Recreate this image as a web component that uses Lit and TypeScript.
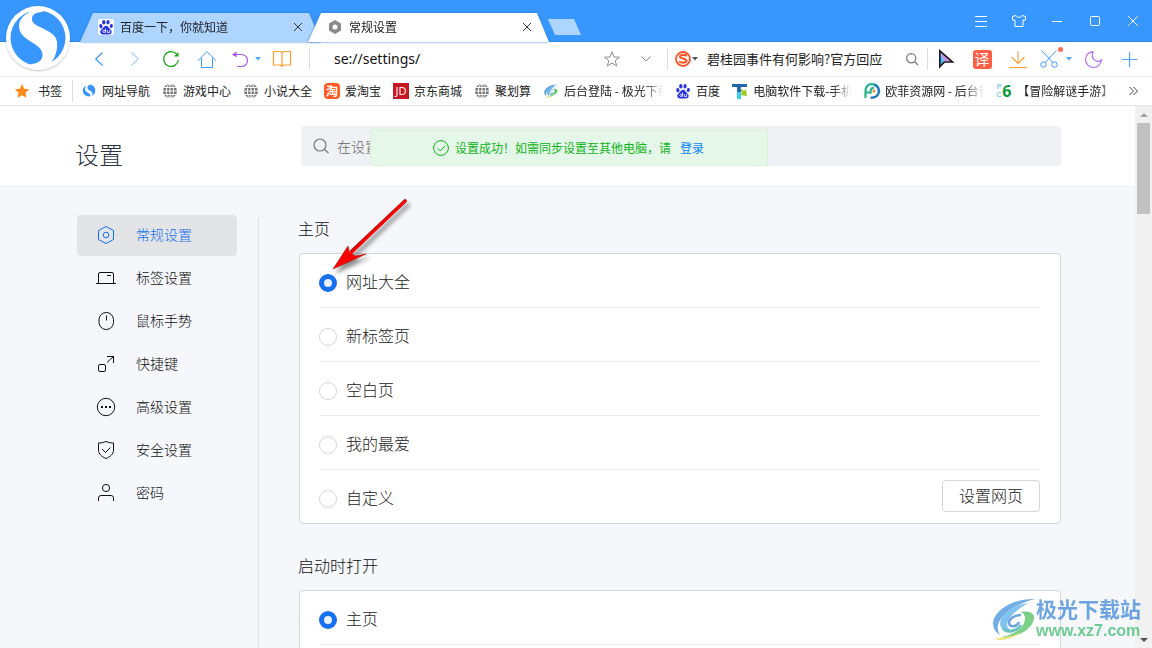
import { LitElement, html, css, svg, nothing } from "lit";
import { customElement, state } from "lit/decorators.js";
import { classMap } from "lit/directives/class-map.js";

const icon = (w: number, h: number, body: unknown) =>
  html`<svg class="ic" width=${w} height=${h} viewBox="0 0 ${w} ${h}" fill="none" aria-hidden="true">${body}</svg>`;

const paw = (size: number) => html`<svg class="ic" width=${size} height=${size} viewBox="0 0 16 16" fill="#2932e1" aria-hidden="true">
  <ellipse cx="2.9" cy="7.2" rx="1.6" ry="2.2" transform="rotate(-12 2.9 7.2)"></ellipse>
  <ellipse cx="5.8" cy="3.2" rx="1.6" ry="2.3"></ellipse>
  <ellipse cx="10" cy="3.2" rx="1.6" ry="2.3" transform="rotate(8 10 3.2)"></ellipse>
  <ellipse cx="13.3" cy="7" rx="1.6" ry="2.1" transform="rotate(12 13.3 7)"></ellipse>
  <path d="M8 6.8c1.700 0 2.300 1.500 3.500 2.700 1.300 1.300 2.300 2.200 2.100 3.800-.2 1.700-1.600 2.300-3 2.200H5.300c-1.400.1-2.800-.5-3-2.200-.2-1.600.9-2.500 2.200-3.800C5.700 8.300 6.300 6.800 8 6.800z"></path>
  <circle cx="6" cy="12.300" r="1.200" stroke="#fff" stroke-width=".8" fill="none"></circle><path d="M7.500 9.600v4M9.300 11v2.600h2.300V11" stroke="#fff" stroke-width=".8" fill="none"></path>
</svg>`;

const globe = icon(16, 16, svg`<circle cx="8" cy="8" r="7" fill="#777"/><path d="M8 1v14M1 8h14M2.200 4.500h11.600M2.200 11.500h11.600" stroke="#fff"/><ellipse cx="8" cy="8" rx="3.600" ry="7" stroke="#fff"/>`);

const sWave = (size: number) => html`<svg class="ic" width=${size} height=${size} viewBox="0 0 64 64" aria-hidden="true">
  <circle cx="32" cy="32" r="32" fill="#fff"></circle><circle cx="32" cy="32" r="27.5" fill="#3797ff"></circle>
  <path d="M28 4C18 8 13 13 13 20c0 9 8 13 14 17 6 3.500 9.500 7 9.500 12 0 6-5 8.500-11.500 9l1 3h16c7-8 10-17 9-25-1-8-9-11-17-15-6-3-8.500-5-8-9 .5-4 5-6 11-6V3z" fill="#fff"></path>
</svg>`;

const smallWave = icon(16, 16, svg`<path d="M6.500 2.200C3 3 1.200 6 2 9c.7 3 3.500 5 7 4.300 1-.6.5-2-.8-2.800C6 9.200 3.800 8 4 5.500c.2-1.600 1.200-2.600 2.500-3.300z" fill="#3797ff"/><path d="M8.500 1.800c3-.5 5.500 2 5.800 5.200.2 2.500-1 4.700-3 6 .6-2.300.2-3.800-1.800-5C7.800 7 6.300 6 6.500 4.200c.1-1.200.8-2 2-2.400z" fill="#3797ff"/>`);

const swirl = (w: number, h: number, pad = 0) => html`<svg class="ic" width=${w} height=${h} viewBox="${-pad} ${-pad} ${44 + pad * 2} ${42 + pad * 2}" fill="none" aria-hidden="true">
  <path d="M43 1C24 0 2 11 1 25c0 5 2 9 7 12-3-5-3-10 0-15C13 13 25 6 43 1z" fill="#4f9ae0"></path>
  <path d="M36 5C22 7 9 15 8 25c0 6 5 9 11 7-4-2-5-5-3-9 3-6 10-12 20-18z" fill="#62b4ea"></path>
  <path d="M29 17c-7 0-12 4-12 8 1 5 8 4 10-1" stroke="#4a8fd8" stroke-width="2.5"></path>
  <path d="M11 30c3 5 14 4 18-3" stroke="#48b2b0" stroke-width="3"></path>
  <path d="M29 14c12-2 16 4 11 12C34 35 22 40 9 39c10-2 19-6 22-12 3-6 3-10-2-13z" fill="#5cc46a"></path>
  <path d="M3 41c5-2 16-1 26-7-6 5-17 10-26 7z" fill="#e4dc5a"></path>
</svg>`;

const caret = (color: string) => icon(6, 4, svg`<path d="M0 0h6L3 3.500z" fill=${color}/>`);
const cross = icon(10, 10, svg`<path d="M1 1l8 8M9 1L1 9" stroke="#333"/>`);

const bookmarks: { label: string; icon: unknown; clip?: boolean }[] = [
  { label: "网址导航", icon: smallWave },
  { label: "游戏中心", icon: globe },
  { label: "小说大全", icon: globe },
  { label: "爱淘宝", icon: html`<span class="fav tao">淘</span>` },
  { label: "京东商城", icon: html`<span class="fav jd">JD</span>` },
  { label: "聚划算", icon: globe },
  { label: "后台登陆 - 极光下载站", icon: swirl(16, 16, 3), clip: true },
  { label: "百度", icon: paw(16) },
  { label: "电脑软件下载-手机软件", icon: icon(16, 16, svg`<path d="M0 1h15v3H9v12H5V4H0z" fill="#2265b0"/><path d="M5 9h4v7H5z" fill="#3ad0ee"/><path d="M8 5l4 3 2-2 1 7-7-1 2-2z" fill="#9cc820"/>`), clip: true },
  { label: "欧菲资源网 - 后台管理", icon: icon(16, 16, svg`<path d="M10 1.500A6.600 6.600 0 1 1 6.500 14.400" stroke="#1c78b8" stroke-width="2.400"/><path d="M10.500 1.600C5 0 1.500 3 1.500 8v7M2 9.500h5M10 4.800c-3-.3-3.500 2-3.500 6" stroke="#28b48c" stroke-width="2.200"/><circle cx="10" cy="8" r="1.500" fill="#f08a24"/>`), clip: true },
  { label: "【冒险解谜手游】手游", icon: html`<span class="fav pc"><span class="pcs"><span>P</span><span>C</span></span>6</span>`, clip: true },
];

const navItems = [
  { label: "常规设置", icon: svg`<path d="M10 1.500l7.500 4v9l-7.500 4-7.500-4v-9z"/><circle cx="10" cy="10" r="2.800"/>` },
  { label: "标签设置", icon: svg`<path d="M0 15.500h20M2.500 15V6a1.500 1.500 0 0 1 1.500-1.500h12A1.500 1.500 0 0 1 17.500 6v9M11 7.500h4"/>` },
  { label: "鼠标手势", icon: svg`<rect x="3" y="1.500" width="14.500" height="17" rx="7.250"/><path d="M10.500 4.500v5"/>` },
  { label: "快捷键", icon: svg`<rect x="2.500" y="10.500" width="7" height="7" rx="1.500"/><path d="M11 8.500l7-6.500M11 2.500h6.500v6.500"/>` },
  { label: "高级设置", icon: svg`<circle cx="10" cy="10" r="8.700"/><path d="M5 10h2M9 10h2M13 10h2" stroke-width="2"/>` },
  { label: "安全设置", icon: svg`<path d="M10 1.500q4 1.800 7.500 1.500v7c0 4-3.500 7-7.500 8.500C6 17 2.500 14 2.500 10V3q3.500.3 7.500-1.500z"/><path d="M6 9l3.500 3.500 5-5"/>` },
  { label: "密码", icon: svg`<circle cx="10" cy="5" r="3.600"/><path d="M2.500 18v-3a2.500 2.500 0 0 1 2.500-2.500h10a2.500 2.500 0 0 1 2.500 2.500v3"/>` },
];

@customElement("app-root")
export class AppRoot extends LitElement {
  @state() private home = "网址大全";
  @state() private active = "常规设置";

  static styles = css`
    :host { display: flex; flex-direction: column; height: 100vh; overflow: hidden; position: relative; background: #fff;
      font: 12px/18px "Noto Sans CJK SC", sans-serif; color: #222; }
    * { box-sizing: border-box; }
    button { border: 0; padding: 0; margin: 0; background: none; font: inherit; color: inherit; display: flex; align-items: center; justify-content: center; }
    a { color: inherit; text-decoration: none; }
    input { font: inherit; color: inherit; border: 0; outline: 0; background: none; margin: 0; padding: 0; min-width: 0; }
    .ic { display: block; flex: none; overflow: visible; }

    .titlebar { flex: none; height: 42px; display: flex; align-items: flex-end; background: #3797ff; padding-left: 80px; box-shadow: inset 0 -1px #2e86e8; }
    .logo { position: absolute; left: 6px; top: 6px; z-index: 2; border-radius: 50%; box-shadow: 0 1px 2px rgba(0, 0, 0, .25); }
    .tabs { display: flex; align-items: flex-end; flex: 1; min-width: 0; }
    .edge { filter: drop-shadow(0 0 1px #2878d0); flex: 0 1 241px; min-width: 0; }
    .edge + .edge { margin-left: -13px; z-index: 1; }
    .tab { height: 29px; display: flex; align-items: center; gap: 6px; padding: 0 18px 2px; background: #aed5ff;
      clip-path: polygon(13px 0, calc(100% - 12px) 0, 100% 100%, 0 100%); }
    .tab.on { background: #fff; padding: 0 17px 2px 19px; }
    .tab .name { flex: 1; white-space: nowrap; overflow: hidden; }
    .paw { background: #fff; border-radius: 2px; }
    .newtab { width: 33px; height: 16px; margin: 0 0 7px -1px; background: #aed5ff; clip-path: polygon(0 0, 26px 0, 100% 100%, 7px 100%); }
    .win { display: flex; align-self: stretch; }
    .win button { width: 38px; }

    .toolbar { flex: none; height: 35px; display: flex; align-items: center; padding: 0 5px 0 81px; border-bottom: 1px solid #e6e6e6; }
    .toolbar button { width: 36px; height: 34px; flex: none; }
    .toolbar .undo { width: 30px; }
    .toolbar .drop { width: 6px; }
    .toolbar .book { width: 42px; }
    .toolbar .star { width: 24px; }
    .toolbar .chev { width: 43px; }
    .sep { width: 1px; height: 22px; background: #ddd; flex: none; }
    .toolbar .book + .sep { margin-left: 6px; }
    .url { flex: 1; padding-left: 24px; font: 14px/22px "Noto Sans", sans-serif; color: #111; }
    .hot { width: 259px; display: flex; align-items: center; }
    .hot input { flex: 1; font-size: 13px; margin-left: 9px; }
    .hot .go { width: 31px; }
    .toolbar .sogou { width: 17px; margin: 0 1px 0 6px; }
    .yi { width: 19px; height: 19px; border-radius: 3px; background: #ff5e46; color: #fff; font-size: 15px; line-height: 18px; text-align: center; }
    .toolbar .cut { width: 26px; position: relative; }
    .toolbar .cut + .drop { width: 13px; }
    .dot { position: absolute; right: -1px; top: 5px; width: 5px; height: 5px; border-radius: 50%; background: #ff6b55; }

    .marks { flex: none; height: 29px; display: flex; align-items: center; gap: 13px; padding: 0 14px; border-bottom: 1px solid #e6e6e6; white-space: nowrap; overflow: hidden; }
    .marks a { display: flex; align-items: center; gap: 4px; flex: none; }
    .marks .first { gap: 8px; margin-right: -3px; }
    .marks .sep { margin-right: -5px; }
    .marks a:not(.first) { gap: 5px; margin-right: -1px; }
    .clip { width: 99px; overflow: hidden; -webkit-mask-image: linear-gradient(90deg, #000 80%, transparent); mask-image: linear-gradient(90deg, #000 80%, transparent); }
    .fav { width: 16px; height: 16px; line-height: 16px; text-align: center; color: #fff; flex: none; }
    .tao { background: #ff5a1f; border-radius: 4px; font-size: 12px; font-weight: 700; }
    .jd { background: #c81623; font: 11px/16px "Open Sans", sans-serif; }
    .pc { display: flex; align-items: center; color: #0a9a3c; font: bold 16px/16px "Open Sans", sans-serif; }
    .pcs { display: flex; flex-direction: column; width: 6px; font: 7px/8px "Liberation Sans", sans-serif; color: #3bb5ea; }
    .marks .more { margin-left: auto; flex: none; }

    .view { flex: 1; min-height: 0; display: flex; background: #f5f7fb; }
    .page { flex: 1; min-width: 0; overflow: hidden; }
    .head { display: flex; align-items: center; height: 81px; background: #fff; border-bottom: 1px solid #eceef0; padding: 0 74px 0 75px; position: relative; }
    h1 { margin: 16px 0 0; width: 226px; font-size: 24px; line-height: 36px; font-weight: 300; color: #2b3440; flex: none; }
    .search { flex: 1; display: flex; align-items: center; gap: 8px; height: 40px; padding: 0 12px; border-radius: 4px; background: #f0f1f5; }
    .search input { flex: 1; font-size: 14px; font-weight: 300; }
    .search input::placeholder { color: #666; opacity: 1; }
    .toast { position: absolute; left: 370px; top: 23px; width: 398px; height: 37px; display: flex; align-items: center; gap: 6px; padding-left: 62px;
      background: #e5f7e9; border: 1px solid #d9f3d4; border-radius: 2px; color: #0fb419; white-space: nowrap; }
    .toast a { color: #0a84ff; margin-left: 3px; }
    .body { display: flex; padding: 28px 74px 0 77px; }
    nav { width: 160px; flex: none; display: flex; flex-direction: column; gap: 2px; }
    nav a { display: flex; align-items: center; gap: 20px; height: 41px; padding: 0 0 1px 19px; border-radius: 4px; font-size: 14px; font-weight: 300; color: #111; }
    nav span { padding-bottom: 2px; }
    nav svg { stroke: currentColor; stroke-width: 1px; }
    nav a.on { background: #e2e4e6; color: #146ef0; }
    main { flex: 1; margin: 2px 0 0 21px; padding-left: 40px; border-left: 1px solid #e0e2e6; }
    h2 { margin: 0 0 14px -1px; font-size: 16px; line-height: 22px; font-weight: 300; color: #111; }
    .card { border: 1px solid #d2d5da; border-radius: 4px; background: #fff; padding: 0 20px; margin-bottom: 30px; font-size: 16px; font-weight: 300; }
    .row { height: 54px; display: flex; align-items: center; border-top: 1px solid #e8e9eb; padding-top: 4px; }
    .row:first-child { border-top-color: transparent; margin-top: -1px; }
    .row label { display: flex; align-items: center; gap: 9px; flex: 1; line-height: 24px; }
    .row label span { padding-bottom: 4px; }
    input[type="radio"] { appearance: none; width: 18px; height: 18px; border: 1px solid #d4d6da; border-radius: 50%; background: #fff; margin-left: -1px; }
    input[type="radio"]:checked { border: 5px solid #1670f0; background: #e6f0ff; }
    .setbtn { width: 98px; height: 32px; border: 1px solid #d4d6da; border-radius: 4px; margin-top: -6px; padding-bottom: 2px; }

    .bar { flex: none; width: 17px; background: #f1f1f1; display: flex; flex-direction: column; align-items: center; justify-content: space-between; padding: 7px 0 6px; }
    .thumb { width: 13px; height: 91px; background: #c1c1c1; margin: 6px 0 auto; }
    .arrow { position: absolute; left: 320px; top: 193px; z-index: 3; pointer-events: none; filter: drop-shadow(3px 4px 2px rgba(0, 0, 0, .45)); }
    .mark { position: absolute; right: 11px; bottom: 6px; z-index: 3; display: flex; align-items: flex-end; pointer-events: none; opacity: .8; }
    .mark .ic { margin-bottom: 2px; }
    .mark b { display: block; font-size: 21px; line-height: 24px; color: #4a90dc; }
    .mark i { display: block; font: bold 16px/22px "Liberation Sans", sans-serif; color: #4cc07a; }
  `;

  private radio(group: string, label: string, checked: boolean, extra: unknown = nothing) {
    return html`<div class="row">
      <label><input type="radio" name=${group} .checked=${checked} @change=${() => { if (group === "home") this.home = label; }} /><span>${label}</span></label>${extra}
    </div>`;
  }

  render() {
    return html`
      <header class="titlebar">
        <div class="logo">${sWave(64)}</div>
        <div class="tabs">
          <div class="edge"><div class="tab"><span class="paw">${paw(16)}</span><span class="name">百度一下，你就知道</span>
            <button aria-label="关闭">${cross}</button></div></div>
          <div class="edge"><div class="tab on">${icon(16, 16, svg`<path d="M8 1l6 3.500v7L8 15l-6-3.500v-7z" fill="#8a8a8a"/><circle cx="8" cy="8" r="2.500" fill="#fff"/>`)}<span class="name">常规设置</span>
            <button aria-label="关闭">${cross}</button></div></div>
          <button class="newtab" aria-label="新标签"></button>
        </div>
        <div class="win">
          <button aria-label="菜单">${icon(12, 11, svg`<path d="M0 .5h12M0 5.500h12M0 10.500h12" stroke="#fff"/>`)}</button>
          <button aria-label="皮肤">${icon(14, 12, svg`<path d="M4 .5L.5 1.500V5H3v6.500h8V5h2.500V1.500L10 .5C9 3 5 3 4 .5z" stroke="#fff"/>`)}</button>
          <button aria-label="最小化">${icon(10, 1, svg`<path d="M0 .5h10" stroke="#fff"/>`)}</button>
          <button aria-label="最大化">${icon(10, 10, svg`<rect x=".5" y=".5" width="9" height="9" rx="1" stroke="#fff"/>`)}</button>
          <button aria-label="关闭窗口">${icon(10, 10, svg`<path d="M0 0l10 10M10 0L0 10" stroke="#fff"/>`)}</button>
        </div>
      </header>

      <div class="toolbar">
        <button aria-label="后退">${icon(8, 14, svg`<path d="M7.500 .5L.7 7l6.800 6.500" stroke="#3c9bff" stroke-width="1.200"/>`)}</button>
        <button aria-label="前进">${icon(8, 14, svg`<path d="M.5 .5L7.300 7 .5 13.500" stroke="#a8d0ff" stroke-width="1.200"/>`)}</button>
        <button aria-label="刷新">${icon(16, 16, svg`<path d="M13.500 3A7.400 7.400 0 1 0 15.400 9" stroke="#12a312" stroke-width="1.200"/><path d="M15.500 1v4.500H11z" fill="#12a312"/>`)}</button>
        <button aria-label="主页">${icon(18, 17, svg`<path d="M0 9.500L9 .7l9 8.800M3.500 7v9.500h11V7" stroke="#3c9bff"/>`)}</button>
        <button class="undo" aria-label="恢复">${icon(16, 16, svg`<path d="M1 3.500h8.500a6 6 0 0 1 0 12H5" stroke="#a95cf0" stroke-width="1.200"/><path d="M4.500 .5v6L0 3.500z" fill="#a95cf0"/>`)}</button>
        <button class="drop" aria-label="更多恢复">${caret("#4ea6ff")}</button>
        <button class="book" aria-label="阅读">${icon(18, 16, svg`<path d="M.5 .5H7.500L9 2l1.500-1.500h7v13.500H10.500L9 15.500l-1.500-1.500H.5zM9 2v13" stroke="#ff9f30" stroke-width="1.200"/>`)}</button>
        <span class="sep"></span>
        <input class="url" aria-label="地址" value="se://settings/" />
        <button class="star" aria-label="收藏">${icon(16, 16, svg`<path d="M8 .8l2 5.200 5.400.2-4.200 3.400 1.500 5.400L8 12l-4.700 3 1.500-5.400L.6 6.200 6 6z" stroke="#8a8a8a"/>`)}</button>
        <button class="chev" aria-label="展开">${icon(10, 6, svg`<path d="M.5 .5L5 5 9.500 .5" stroke="#8a8a8a"/>`)}</button>
        <span class="sep"></span>
        <div class="hot">
          <button class="sogou" aria-label="搜狗">${icon(16, 16, svg`<circle cx="8" cy="8" r="7" stroke="#f9552a" stroke-width="1.800"/><path d="M12 4.700c-2-1-7-1.200-7 .8 0 2.500 6.500 1.500 6.500 4.300 0 2.200-5 2.200-7.500.8" stroke="#f9552a" stroke-width="2.200"/>`)}</button>
          <button class="drop" aria-label="切换搜索">${caret("#555")}</button>
          <input aria-label="搜索" value="碧桂园事件有何影响?官方回应" />
          <button class="go" aria-label="搜索">${icon(12, 12, svg`<circle cx="5.200" cy="5.200" r="4.600" stroke="#777" stroke-width="1.200"/><path d="M8.500 8.500L12 12" stroke="#777" stroke-width="1.200"/>`)}</button>
        </div>
        <span class="sep"></span>
        <button aria-label="光标">${icon(14, 18, svg`<path d="M.8 1v15.500l4.500-4.500z" fill="#48b6f0"/><path d="M.8 1l12.500 10.500H5.500z" fill="#c590e8"/><path d="M.8 .8v16L5.500 12h8z" stroke="#181820" stroke-width="1.600"/>`)}</button>
        <button aria-label="翻译"><span class="yi">译</span></button>
        <button aria-label="下载">${icon(18, 17, svg`<path d="M9 0v12M2.500 6L9 12.500 15.500 6M0 16.500h18" stroke="#ff9f30" stroke-width="1.100"/>`)}</button>
        <button class="cut" aria-label="截图">${icon(18, 18, svg`<path d="M1.500 .5l11.300 12M16.500 .5L5.200 12.500" stroke="#3c9bff"/><circle cx="3.500" cy="14.500" r="2.700" stroke="#3c9bff"/><circle cx="14.500" cy="14.500" r="2.700" stroke="#3c9bff"/>`)}<span class="dot"></span></button>
        <button class="drop" aria-label="更多截图">${caret("#4ea6ff")}</button>
        <button aria-label="夜间模式">${icon(17, 17, svg`<path d="M8 .7A7.900 7.900 0 1 0 16.300 9C12 12.500 5 8 8 .7z" stroke="#b36bf2" stroke-width="1.200"/>`)}</button>
        <button aria-label="添加">${icon(15, 15, svg`<path d="M7.500 0v15M0 7.500h15" stroke="#4ea6ff" stroke-width="1.200"/>`)}</button>
      </div>

      <div class="marks">
        <a class="first" href="#">${icon(16, 16, svg`<path d="M8 1l2.200 4.700 5 .6-3.700 3.500 1 5L8 12.300l-4.500 2.500 1-5L.8 6.300l5-.6z" fill="#ff8a1c"/>`)}书签</a>
        <span class="sep"></span>
        ${bookmarks.map((b) => html`<a href="#">${b.icon}<span class=${classMap({ clip: !!b.clip })}>${b.label}</span></a>`)}
        <button class="more" aria-label="更多书签">${icon(9, 8, svg`<path d="M.5 0l4 4-4 4M4.500 0l4 4-4 4" stroke="#444"/>`)}</button>
      </div>

      <div class="view">
        <div class="page">
          <div class="head">
            <h1>设置</h1>
            <div class="search">
              ${icon(16, 16, svg`<circle cx="7" cy="7" r="6" stroke="#777" stroke-width="1.200"/><path d="M11.500 11.500l4 3.500" stroke="#777" stroke-width="1.200"/>`)}
              <input type="text" aria-label="在设置中搜索" placeholder="在设置中搜索" />
            </div>
            <div class="toast" role="status">
              ${icon(16, 16, svg`<circle cx="8" cy="8" r="7.400" stroke="#0fb419"/><path d="M4.500 8.300l2.700 2.700 5-5.300" stroke="#0fb419"/>`)}
              <span>设置成功！如需同步设置至其他电脑，请</span><a href="#">登录</a>
            </div>
          </div>
          <div class="body">
            <nav>
              ${navItems.map((n) => html`<a href="#" class=${classMap({ on: n.label === this.active })} @click=${(e: Event) => { e.preventDefault(); this.active = n.label; }}>${icon(20, 20, n.icon)}<span>${n.label}</span></a>`)}
            </nav>
            <main>
              <h2>主页</h2>
              <div class="card">
                ${["网址大全", "新标签页", "空白页", "我的最爱"].map((l) => this.radio("home", l, this.home === l))}
                ${this.radio("home", "自定义", this.home === "自定义", html`<button class="setbtn">设置网页</button>`)}
              </div>
              <h2>启动时打开</h2>
              <div class="card">
                ${this.radio("start", "主页", true)}
                ${this.radio("start", "上次未关闭的页面", false)}
              </div>
            </main>
          </div>
        </div>
        <div class="bar">
          ${icon(8, 4, svg`<path d="M0 4h8L4 0z" fill="#a0a0a0"/>`)}
          <div class="thumb"></div>
          ${icon(8, 4, svg`<path d="M0 0h8L4 4z" fill="#505050"/>`)}
        </div>
      </div>

      <svg class="arrow" width="96" height="84" viewBox="0 0 96 84" aria-hidden="true">
        <path d="M85 8L32 58" stroke="#a01010" stroke-width="3.600" stroke-linecap="round"></path>
        <path d="M13 76L28 53l1.500 6.500 6 3.500 10.500-2z" fill="#ff0000" stroke="#a01010" stroke-width=".6"></path>
        <path d="M85 8L31 60" stroke="#ff0000" stroke-width="2.600" stroke-linecap="round"></path>
      </svg>
      <div class="mark">${swirl(44, 42)}<div><b>极光下载站</b><i>www.xz7.com</i></div></div>
    `;
  }
}
